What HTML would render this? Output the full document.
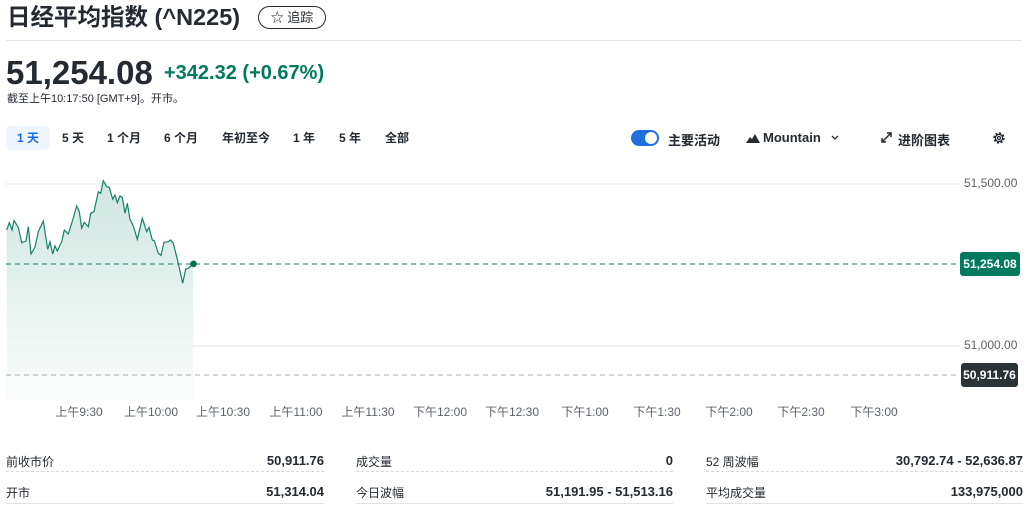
<!DOCTYPE html>
<html><head><meta charset="utf-8"><style>
*{margin:0;padding:0;box-sizing:border-box}
body{width:1036px;height:509px;background:#fff;font-family:"Liberation Sans","Noto Sans CJK SC",sans-serif;color:#232a31;position:relative;overflow:hidden}
.a{position:absolute;white-space:nowrap}
.tab{position:absolute;top:126px;height:24px;line-height:24px;font-size:12px;font-weight:bold;color:#232a31;text-align:center}
.tl{position:absolute;top:403px;font-size:12px;color:#5b636a;transform:translateX(-50%)}
.lab{position:absolute;font-size:12px;color:#232a31}
.val{position:absolute;font-size:13px;font-weight:bold;text-align:right}
</style></head><body>
<div class="a" style="left:7px;top:3px;font-size:23.5px;font-weight:bold;line-height:28px">日经平均指数 (^N225)</div>
<div class="a" style="left:258px;top:6px;width:68px;height:23px;border:1px solid #232a31;border-radius:12px;font-size:13px;line-height:21px;text-align:center">☆ 追踪</div>
<div class="a" style="left:6px;top:40px;width:1016px;height:1px;background:#e0e4e9"></div>
<div class="a" style="left:6px;top:55px;font-size:33px;font-weight:bold;line-height:36px">51,254.08</div>
<div class="a" style="left:164px;top:61px;font-size:20px;font-weight:bold;color:#007a5e;line-height:24px">+342.32 (+0.67%)</div>
<div class="a" style="left:7px;top:90px;font-size:11px;color:#232a31">截至上午10:17:50 [GMT+9]。开市。</div>
<div class="tab" style="left:6px;width:44px;background:#f0f6ff;border-radius:4px;color:#0f69ff">1 天</div>
<div class="tab" style="left:56px;width:34px">5 天</div>
<div class="tab" style="left:102px;width:44px">1 个月</div>
<div class="tab" style="left:158px;width:46px">6 个月</div>
<div class="tab" style="left:218px;width:56px">年初至今</div>
<div class="tab" style="left:288px;width:32px">1 年</div>
<div class="tab" style="left:334px;width:32px">5 年</div>
<div class="tab" style="left:378px;width:38px">全部</div>
<div class="a" style="left:631px;top:130px;width:28px;height:16px;border-radius:8px;background:#1e6fe0"><div style="position:absolute;right:2px;top:2px;width:12px;height:12px;border-radius:6px;background:#fff"></div></div>
<div class="a" style="left:668px;top:130px;font-size:13px;font-weight:bold">主要活动</div>
<svg class="a" style="left:746px;top:134px" width="14" height="9"><path d="M0 9 L4 3 L6 5 L9 0 L14 9Z" fill="#232a31"/></svg>
<div class="a" style="left:763px;top:130px;font-size:13px;font-weight:bold">Mountain</div>
<svg class="a" style="left:831px;top:135px" width="8" height="6"><path d="M1 1 L4 4 L7 1" stroke="#232a31" fill="none" stroke-width="1.3"/></svg>
<svg class="a" style="left:881px;top:132px" width="11" height="11"><path d="M1 10 L10 1 M6 1 H10 V5 M1 6 V10 H5" stroke="#232a31" fill="none" stroke-width="1.5"/></svg>
<div class="a" style="left:898px;top:130px;font-size:13px;font-weight:bold">进阶图表</div>
<svg class="a" style="left:992px;top:131px" width="14" height="14" viewBox="0 0 14 14"><circle cx="7" cy="7" r="4.6" fill="none" stroke="#232a31" stroke-width="2.2" stroke-dasharray="2 1.6"/><circle cx="7" cy="7" r="3.6" fill="none" stroke="#232a31" stroke-width="1.3"/><circle cx="7" cy="7" r="1.5" fill="none" stroke="#232a31" stroke-width="1.2"/></svg>
<svg class="a" style="left:0;top:170px" width="1036" height="230">
<defs><linearGradient id="g" x1="0" y1="0" x2="0" y2="1"><stop offset="0" stop-color="#cfe6e0"/><stop offset="1" stop-color="#fbfdfc"/></linearGradient></defs>
<line x1="6" y1="14" x2="960" y2="14" stroke="#e0e4e9"/>
<line x1="6" y1="176" x2="960" y2="176" stroke="#e0e4e9"/>
<path d="M6.7 60 L9.3 52.7 L12 60 L14 50.7 L18.3 57.3 L21.7 72.7 L26 71 L28.3 56.7 L31 84 L35 77.3 L38.3 61.7 L43.3 51 L47.7 79.3 L50 71.7 L52.7 84 L55 76 L57.3 81 L61.7 71.7 L64.3 60 L68.3 64 L72.7 50 L76.7 36 L79.3 41.7 L81.7 58.3 L84.3 52.3 L88.3 56.7 L90.7 43.3 L94 41.7 L98.3 21.7 L100.7 23.3 L103.3 10.7 L106.7 16.7 L109.3 17.3 L112.7 29.3 L115 25 L117.3 32.7 L120 26 L122.3 27.3 L125 43.3 L127.3 33.3 L130 49.3 L133.3 56 L137.3 69.3 L142.3 48.3 L146.7 61.7 L149 57.3 L152.3 70 L154.3 70.7 L158.3 83.3 L161 85.3 L164 72.3 L168.3 71.7 L170.7 70 L173.3 73.3 L178.3 93.3 L182.7 113.3 L185.7 99 L188.3 98.3 L193.3 93.7 L193.3 230 L6.7 230Z" fill="url(#g)"/>
<path d="M6.7 60 L9.3 52.7 L12 60 L14 50.7 L18.3 57.3 L21.7 72.7 L26 71 L28.3 56.7 L31 84 L35 77.3 L38.3 61.7 L43.3 51 L47.7 79.3 L50 71.7 L52.7 84 L55 76 L57.3 81 L61.7 71.7 L64.3 60 L68.3 64 L72.7 50 L76.7 36 L79.3 41.7 L81.7 58.3 L84.3 52.3 L88.3 56.7 L90.7 43.3 L94 41.7 L98.3 21.7 L100.7 23.3 L103.3 10.7 L106.7 16.7 L109.3 17.3 L112.7 29.3 L115 25 L117.3 32.7 L120 26 L122.3 27.3 L125 43.3 L127.3 33.3 L130 49.3 L133.3 56 L137.3 69.3 L142.3 48.3 L146.7 61.7 L149 57.3 L152.3 70 L154.3 70.7 L158.3 83.3 L161 85.3 L164 72.3 L168.3 71.7 L170.7 70 L173.3 73.3 L178.3 93.3 L182.7 113.3 L185.7 99 L188.3 98.3 L193.3 93.7" fill="none" stroke="#16806a" stroke-width="1.2"/>
<line x1="6" y1="94" x2="960" y2="94" stroke="#16806a" stroke-dasharray="5 4"/>
<line x1="6" y1="205" x2="960" y2="205" stroke="#a8adb2" stroke-dasharray="5 4"/>
<circle cx="193.5" cy="93.8" r="3.3" fill="#0e6b56"/>
</svg>
<div class="a" style="left:964px;top:176px;font-size:12px;color:#5b636a">51,500.00</div>
<div class="a" style="left:964px;top:338px;font-size:12px;color:#5b636a">51,000.00</div>
<div class="a" style="left:960px;top:252px;width:60px;height:24px;background:#007a5e;border-radius:3px;color:#fff;font-size:12px;font-weight:bold;line-height:24px;text-align:center">51,254.08</div>
<div class="a" style="left:961px;top:363px;width:57px;height:24px;background:#2c3336;border-radius:3px;color:#fff;font-size:12px;font-weight:bold;line-height:24px;text-align:center">50,911.76</div>
<div class="tl" style="left:79px">上午9:30</div><div class="tl" style="left:151px">上午10:00</div><div class="tl" style="left:223px">上午10:30</div><div class="tl" style="left:296px">上午11:00</div><div class="tl" style="left:368px">上午11:30</div><div class="tl" style="left:440px">下午12:00</div><div class="tl" style="left:512px">下午12:30</div><div class="tl" style="left:585px">下午1:00</div><div class="tl" style="left:657px">下午1:30</div><div class="tl" style="left:729px">下午2:00</div><div class="tl" style="left:801px">下午2:30</div><div class="tl" style="left:874px">下午3:00</div>
<div class="lab" style="left:6px;top:453px">前收市价</div><div class="val" style="left:200px;width:124px;top:453px">50,911.76</div>
<div class="lab" style="left:356px;top:453px">成交量</div><div class="val" style="left:500px;width:173px;top:453px">0</div>
<div class="lab" style="left:706px;top:453px">52 周波幅</div><div class="val" style="left:820px;width:203px;top:453px">30,792.74 - 52,636.87</div>
<div class="a" style="left:6px;top:471px;width:318px;border-top:1px dashed #d6d9dc"></div>
<div class="a" style="left:356px;top:471px;width:317px;border-top:1px dashed #d6d9dc"></div>
<div class="a" style="left:706px;top:471px;width:317px;border-top:1px dashed #d6d9dc"></div>
<div class="lab" style="left:6px;top:484px">开市</div><div class="val" style="left:200px;width:124px;top:484px">51,314.04</div>
<div class="lab" style="left:356px;top:484px">今日波幅</div><div class="val" style="left:450px;width:223px;top:484px">51,191.95 - 51,513.16</div>
<div class="lab" style="left:706px;top:484px">平均成交量</div><div class="val" style="left:820px;width:203px;top:484px">133,975,000</div>
<div class="a" style="left:6px;top:503px;width:318px;height:1px;background:#e0e4e9"></div>
<div class="a" style="left:356px;top:503px;width:317px;height:1px;background:#e0e4e9"></div>
<div class="a" style="left:706px;top:503px;width:317px;height:1px;background:#e0e4e9"></div>
</body></html>
